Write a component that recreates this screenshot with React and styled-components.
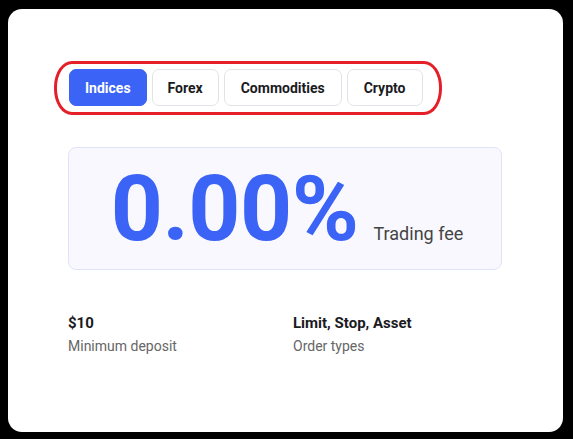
import React from "react";
import styled, { createGlobalStyle } from "styled-components";

const Global = createGlobalStyle`
  html, body {
    margin: 0;
    padding: 0;
    background: #000;
    font-family: Roboto, "Liberation Sans", sans-serif;
  }
`;

const Page = styled.div`
  width: 573px;
  height: 439px;
  padding: 9px 10px 7px 8px;
  box-sizing: border-box;
  background: #000;
`;

const Card = styled.div`
  height: 100%;
  background: #fff;
  border-radius: 14px;
  padding: 60px 60px 0 60px;
  box-sizing: border-box;
`;

const Highlight = styled.div`
  display: inline-flex;
  position: relative;
  margin-left: 1px;
`;

const Ring = styled.div`
  position: absolute;
  left: -15px;
  top: -8px;
  right: -19px;
  bottom: -9px;
  border: 3px solid #e51f27;
  border-radius: 18px / 26px;
  pointer-events: none;
`;

const Tabs = styled.div`
  display: flex;
  gap: 5px;
`;

const Tab = styled.button`
  height: 37px;
  padding: 0 ${(p) => p.$px}px;
  border-radius: 7px;
  border: 1px solid ${(p) => (p.$active ? "#3b63f6" : "#e2e3e8")};
  background: ${(p) => (p.$active ? "#3b63f6" : "#fff")};
  color: ${(p) => (p.$active ? "#fff" : "#1b1b1f")};
  font-family: Roboto, "Liberation Sans", sans-serif;
  font-weight: 700;
  font-size: 14px;
  cursor: pointer;
`;

const FeeBox = styled.div`
  margin-top: 41px;
  height: 123px;
  width: 434px;
  box-sizing: border-box;
  border: 1px solid #dfe4fa;
  border-radius: 8px;
  background: #f8f8fe;
  display: flex;
  align-items: baseline;
  justify-content: center;
  padding-top: 5px;
  padding-left: 4px;
  gap: 15px;
`;

const Big = styled.span`
  font-size: 91px;
  font-weight: 700;
  color: #3b63f6;
  line-height: 112px;
  letter-spacing: -0.5px;
`;

const FeeLabel = styled.span`
  font-size: 18px;
  color: #444;
`;

const Stats = styled.div`
  margin-top: 43px;
  display: grid;
  grid-template-columns: 225px 1fr;
`;

const Value = styled.div`
  font-size: 15px;
  font-weight: 700;
  color: #1b1b1f;
  line-height: 20px;
`;

const Caption = styled.div`
  margin-top: 4px;
  font-size: 14px;
  color: #666;
  line-height: 18px;
`;

const tabs = [
  { label: "Indices", px: 15, active: true },
  { label: "Forex", px: 15 },
  { label: "Commodities", px: 16 },
  { label: "Crypto", px: 16 },
];

export default function App() {
  return (
    <>
      <Global />
      <Page>
        <Card>
          <Highlight>
            <Ring />
            <Tabs>
              {tabs.map((t) => (
                <Tab key={t.label} $active={t.active} $px={t.px}>
                  {t.label}
                </Tab>
              ))}
            </Tabs>
          </Highlight>
          <FeeBox>
            <Big>0.00%</Big>
            <FeeLabel>Trading fee</FeeLabel>
          </FeeBox>
          <Stats>
            <div>
              <Value>$10</Value>
              <Caption>Minimum deposit</Caption>
            </div>
            <div>
              <Value>Limit, Stop, Asset</Value>
              <Caption>Order types</Caption>
            </div>
          </Stats>
        </Card>
      </Page>
    </>
  );
}
